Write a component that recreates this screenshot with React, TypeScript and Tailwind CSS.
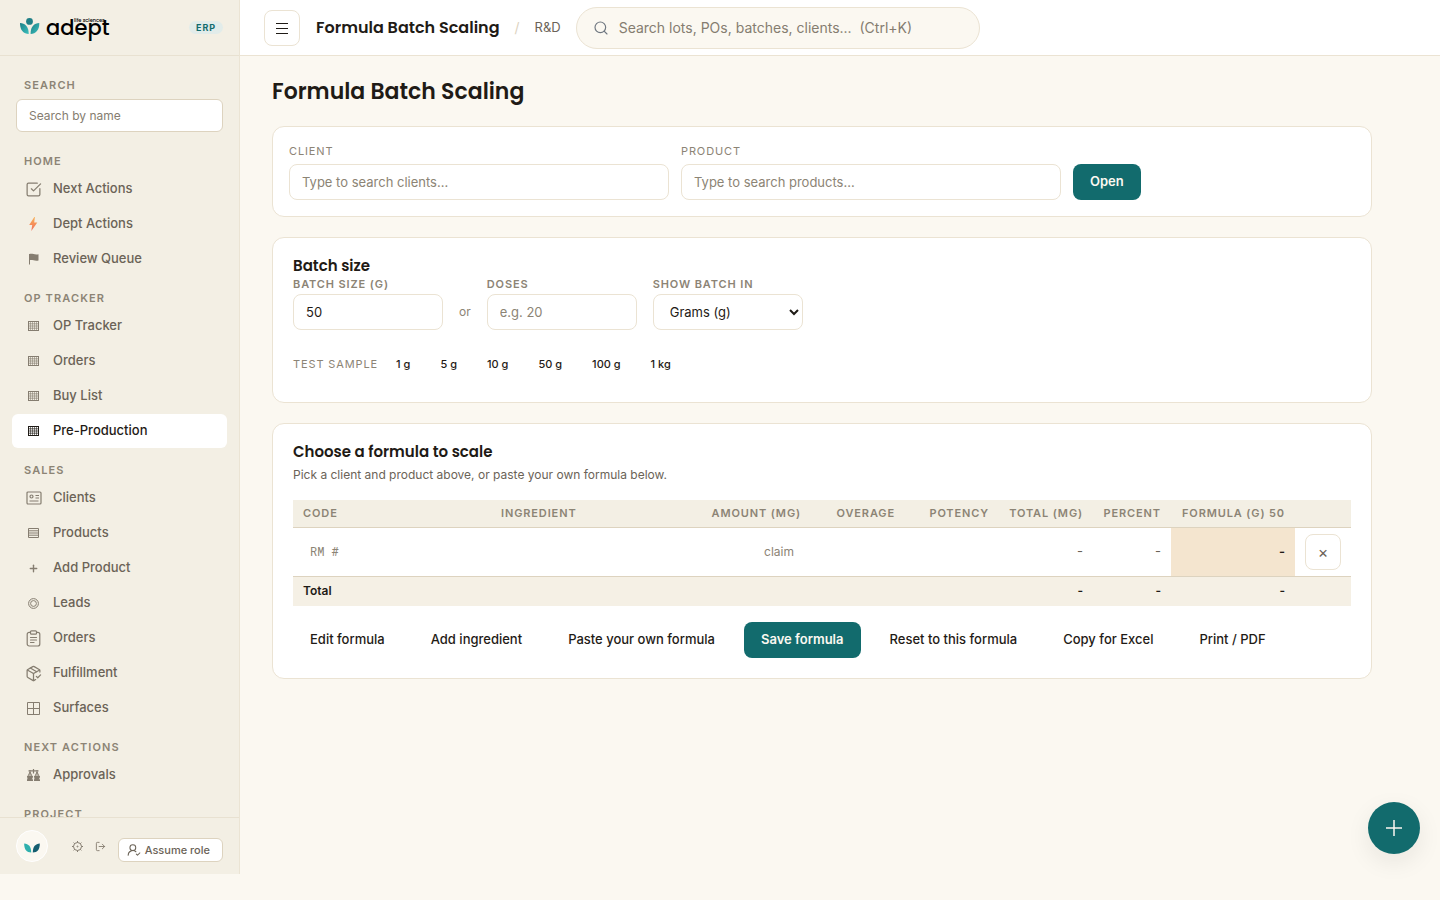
import type { ReactNode } from 'react'
import { LogOut, PackageCheck, Plus, Search, SquareCheckBig, UserRoundCheck } from 'lucide-react'

interface NavItem {
  label: string
  icon: ReactNode
  active?: boolean
}

interface NavSection {
  title: string
  items: NavItem[]
}

const heading = "font-['Poppins','Inter',sans-serif] font-semibold"
const label = 'text-[11px] leading-4 uppercase tracking-[0.08em] text-[#8c8475]'
const navLabel = 'text-[11px] leading-4 font-semibold uppercase tracking-[0.1em] text-[#8c8475]'
const field =
  'h-9 rounded-lg border border-[#ebe3d3] bg-white px-3 text-[13px] text-[#1f1b16] placeholder:text-[#8c8475] outline-none'
const ghostButton = 'h-9 rounded-lg px-[17px] text-[13px] font-medium text-[#1f1b16]'
const primaryButton = 'h-9 rounded-lg bg-[#126b6d] px-[17px] text-[13px] font-semibold text-[#fbf8f1]'

function BoltIcon() {
  return (
    <svg width="9" height="14" viewBox="0 0 9 14" aria-hidden="true">
      <defs>
        <linearGradient id="bolt" x1="0" y1="0" x2="0" y2="1">
          <stop offset="0" stopColor="#f7b257" />
          <stop offset="1" stopColor="#f26d5c" />
        </linearGradient>
      </defs>
      <path d="M5.300 0 .2 7.900h3L2.300 14l6-8.600H5.200L5.900 0z" fill="url(#bolt)" />
    </svg>
  )
}

function FlagIcon() {
  return (
    <svg width="10" height="12" viewBox="0 0 10 12" aria-hidden="true">
      <path d="M.5 1v10.500" stroke="currentColor" />
      <path d="M.5 1c3-.8 5 1.200 9 .3v6.200c-4 .9-6-1.100-9-.3z" fill="currentColor" />
    </svg>
  )
}

function GridIcon() {
  return (
    <svg width="11" height="11" viewBox="0 0 11 11" fill="none" stroke="currentColor" aria-hidden="true">
      <rect x=".5" y=".5" width="10" height="9" />
      <path d="M2.500 1v8M4.500 1v8M6.500 1v8M8.500 1v8" strokeOpacity=".55" />
      <path d="M1 2.800h9M1 5h9M1 7.200h9" strokeOpacity=".7" />
    </svg>
  )
}

function RowsIcon() {
  return (
    <svg width="11" height="11" viewBox="0 0 11 11" fill="none" stroke="currentColor" aria-hidden="true">
      <path d="M.5.5h10v9H.5zM1 2.800h9M1 5h9M1 7.200h9" />
    </svg>
  )
}

function RingsIcon() {
  return (
    <svg width="11" height="11" viewBox="0 0 11 11" fill="none" stroke="currentColor" aria-hidden="true">
      <circle cx="5.500" cy="5.500" r="4.900" />
      <circle cx="5.500" cy="5.500" r="2.900" />
    </svg>
  )
}

function WindowIcon() {
  return (
    <svg width="13" height="13" viewBox="0 0 13 13" fill="none" stroke="currentColor" aria-hidden="true">
      <path d="M.5.5h12v12H.5zM6.500.5v12M.5 6.500h12" />
    </svg>
  )
}

function ClipboardIcon() {
  return (
    <svg
      width="17"
      height="17"
      viewBox="0 0 17 17"
      fill="none"
      stroke="currentColor"
      strokeWidth="1.200"
      strokeLinecap="round"
      aria-hidden="true"
    >
      <rect x="2.200" y="2.300" width="12.600" height="13.700" rx="2" />
      <rect x="5.500" y=".8" width="6" height="3.400" rx="1" fill="#f3efe4" />
      <path d="M5.500 7.500h6M5.500 10h6M5.500 12.500h3.500" />
    </svg>
  )
}

function ScalesIcon() {
  return (
    <svg width="13" height="12" viewBox="0 0 13 12" fill="none" stroke="currentColor" aria-hidden="true">
      <path d="M6.500 0v4.500M1.500 1.800h10" strokeWidth="1.200" />
      <path d="M3 1v9M10 1v9M.8 7.500 3 3l2.200 4.500M7.800 7.500 10 3l2.200 4.500" />
      <path
        d="M0 7h6c0 2.500-1 3.200-1.500 3.200H6V12H0v-1.500C1 10 0 9 0 7zM7 7h6c0 2.500-1 3.200-1.500 3.200H13V12H7v-1.500C8 10 7 9 7 7z"
        fill="currentColor"
        stroke="none"
      />
    </svg>
  )
}

function ClientCardIcon() {
  return (
    <svg
      width="16"
      height="16"
      viewBox="0 0 16 16"
      fill="none"
      stroke="currentColor"
      strokeWidth="1.200"
      aria-hidden="true"
    >
      <rect x="1" y="2" width="14" height="12" rx="1" />
      <circle cx="5.500" cy="6.500" r="1.500" />
      <path d="M9.500 5.500h3.500M9.500 8h3.500M3.500 11h9" />
    </svg>
  )
}

const navSections: NavSection[] = [
  {
    title: 'Home',
    items: [
      { label: 'Next Actions', icon: <SquareCheckBig size={17} strokeWidth={1.75} /> },
      { label: 'Dept Actions', icon: <BoltIcon /> },
      { label: 'Review Queue', icon: <FlagIcon /> },
    ],
  },
  {
    title: 'OP Tracker',
    items: [
      { label: 'OP Tracker', icon: <GridIcon /> },
      { label: 'Orders', icon: <GridIcon /> },
      { label: 'Buy List', icon: <GridIcon /> },
      { label: 'Pre-Production', icon: <GridIcon />, active: true },
    ],
  },
  {
    title: 'Sales',
    items: [
      { label: 'Clients', icon: <ClientCardIcon /> },
      { label: 'Products', icon: <RowsIcon /> },
      { label: 'Add Product', icon: <Plus size={11} strokeWidth={3} /> },
      { label: 'Leads', icon: <RingsIcon /> },
      { label: 'Orders', icon: <ClipboardIcon /> },
      { label: 'Fulfillment', icon: <PackageCheck size={17} strokeWidth={1.75} /> },
      { label: 'Surfaces', icon: <WindowIcon /> },
    ],
  },
  { title: 'Next Actions', items: [{ label: 'Approvals', icon: <ScalesIcon /> }] },
  { title: 'Project', items: [] },
]

const samples = ['1 g', '5 g', '10 g', '50 g', '100 g', '1 kg']

function Logo() {
  return (
    <a href="#" className="flex items-center gap-[6px] text-black" aria-label="adept life sciences">
      <svg width="20" height="20" viewBox="0 0 20 20" aria-hidden="true">
        <defs>
          <linearGradient id="leaf" x1="0" y1="0" x2="1" y2="1">
            <stop offset="0" stopColor="#1b7f86" />
            <stop offset="1" stopColor="#3cc0bd" />
          </linearGradient>
        </defs>
        <circle cx="9.500" cy="3.400" r="3.400" fill="#1f7f86" />
        <path d="M0 5c5 .2 8.800 3.500 8.700 10.900C3.500 15.900-.2 12 0 5z" fill="url(#leaf)" />
        <path d="M19.300 5c-5 .2-8.800 3.500-8.700 10.900 5.200 0 8.900-3.900 8.700-10.900z" fill="url(#leaf)" />
      </svg>
      <span className="relative font-['Poppins','Lato',sans-serif] text-[21px] leading-7 font-medium">
        adept
        <span className="absolute top-1 left-7 text-[5px] leading-[6px] whitespace-nowrap">life sciences</span>
      </span>
    </a>
  )
}

function Sidebar() {
  return (
    <aside className="flex h-[calc(100vh-26px)] w-60 shrink-0 flex-col border-r border-[#ebe4d4] bg-[#f3efe4]">
      <div className="flex h-14 shrink-0 items-center justify-between border-b border-[#e8e1d1] pr-4 pl-5">
        <Logo />
        <span className="rounded-full bg-[#e2ecea] px-[7px] text-[9px] leading-[13px] font-bold tracking-[0.1em] text-[#126b6d]">
          ERP
        </span>
      </div>
      <nav className="min-h-0 flex-1 overflow-hidden px-3 pt-[21px]">
        <div className="px-1">
          <label htmlFor="nav-search" className={`${navLabel} block px-2`}>
            Search
          </label>
          <input
            id="nav-search"
            placeholder="Search by name"
            className="mt-[6px] block h-[33px] w-full rounded-md border border-[#ddd3bf] bg-white px-3 text-[12px] outline-none placeholder:text-[#857d70]"
          />
        </div>
        {navSections.map((section, i) => (
          <div key={section.title} className={i === 0 ? 'mt-[21px]' : 'mt-[14px]'}>
            <h2 className={`${navLabel} px-3`}>{section.title}</h2>
            <ul className="mt-[3px] flex flex-col gap-px">
              {section.items.map((item) => (
                <li key={item.label}>
                  <a
                    href="#"
                    className={`flex h-[34px] items-center gap-[10px] rounded-md px-3 text-[13px] font-medium ${
                      item.active ? 'bg-white text-[#1f1b16]' : 'text-[#6b6357]'
                    }`}
                  >
                    <span
                      className={`flex w-[19px] justify-center ${item.active ? 'text-[#1f1b16]' : 'text-[#857d70]'}`}
                    >
                      {item.icon}
                    </span>
                    {item.label}
                  </a>
                </li>
              ))}
            </ul>
          </div>
        ))}
      </nav>
      <div className="flex h-[57px] shrink-0 items-center justify-between border-t border-[#e8e1d1] px-4">
        <span className="flex size-8 items-center justify-center rounded-full border border-white bg-[#fbf8f1]">
          <svg width="16" height="14" viewBox="0 0 16 14" aria-hidden="true">
            <path d="M.2 4.500C4.500 4.800 7.200 7.500 7.200 13.500 2.700 13.500 0 10.300.2 4.500z" fill="#2fb0ad" />
            <path d="M15.800 4.500C11.500 4.800 8.800 7.500 8.800 13.500c4.500 0 7.200-3.200 7-9z" fill="#155e70" />
          </svg>
        </span>
        <div className="flex items-center text-[#857d70]">
          <button type="button" aria-label="Settings" className="mr-3">
            <svg width="11" height="11" viewBox="0 0 11 11" fill="none" stroke="currentColor" aria-hidden="true">
              <circle cx="5.500" cy="5.500" r="4" />
              <path d="M5.500 0v1.500M5.500 9.500V11M0 5.500h1.500M9.500 5.500H11M1.600 1.600l1 1M8.400 8.400l1 1M1.600 9.400l1-1M8.400 2.600l1-1" />
              <circle cx="5.500" cy="5.500" r=".5" />
            </svg>
          </button>
          <button type="button" aria-label="Log out" className="mr-3">
            <LogOut size={11} />
          </button>
          <button
            type="button"
            className="mt-2 flex h-6 items-center gap-1 rounded-md border border-[#ddd3bf] bg-white pr-3 pl-2 text-[11px] font-medium text-[#6b6357]"
          >
            <UserRoundCheck size={14} strokeWidth={1.75} />
            Assume role
          </button>
        </div>
      </div>
    </aside>
  )
}

function TopBar() {
  return (
    <header className="flex h-14 items-center gap-4 border-b border-[#ebe3d3] bg-white px-6">
      <button
        type="button"
        aria-label="Toggle menu"
        className="flex size-9 items-center justify-center rounded-lg border border-[#ebe3d3] text-[#1f1b16]"
      >
        <svg width="12" height="12" viewBox="0 0 12 12" stroke="currentColor" aria-hidden="true">
          <path d="M0 1.500h12M0 6.500h12M0 11.500h12" />
        </svg>
      </button>
      <div className="flex items-center gap-[15px]">
        <span className={`${heading} text-base`}>Formula Batch Scaling</span>
        <span className="text-sm text-[#ddd3bf]">/</span>
        <span className="text-[13px] text-[#6b6357]">R&amp;D</span>
        <label className="flex h-[42px] w-[404px] items-center gap-[10px] rounded-full border border-[#ebe3d3] bg-[#fbf8f1] px-4">
          <Search size={16} strokeWidth={1.75} className="text-[#6f7780]" />
          <input
            aria-label="Search"
            placeholder="Search lots, POs, batches, clients...  (Ctrl+K)"
            className="min-w-0 flex-1 bg-transparent text-sm outline-none placeholder:text-[#857d70]"
          />
        </label>
      </div>
    </header>
  )
}

function LookupCard() {
  return (
    <section className="flex items-end gap-3 rounded-xl border border-[#ebe3d3] bg-white p-4">
      <div className="flex w-[380px] flex-col gap-[5px]">
        <label htmlFor="client" className={label}>
          Client
        </label>
        <input id="client" placeholder="Type to search clients..." className={field} />
      </div>
      <div className="flex w-[380px] flex-col gap-[5px]">
        <label htmlFor="product" className={label}>
          Product
        </label>
        <input id="product" placeholder="Type to search products..." className={field} />
      </div>
      <button type="button" className={primaryButton}>
        Open
      </button>
    </section>
  )
}

function BatchSizeCard() {
  return (
    <section className="rounded-xl border border-[#ebe3d3] bg-white px-5 pt-[18px] pb-6">
      <h2 className={`${heading} text-[15px] leading-5`}>Batch size</h2>
      <div className="flex items-end gap-4">
        <div className="flex w-[150px] flex-col gap-[2px]">
          <label htmlFor="batch-size" className={`${label} font-semibold`}>
            Batch size (g)
          </label>
          <input id="batch-size" defaultValue="50" className={field} />
        </div>
        <span className="flex h-9 items-center text-[12px] text-[#8c8475]">or</span>
        <div className="flex w-[150px] flex-col gap-[2px]">
          <label htmlFor="doses" className={`${label} font-semibold`}>
            Doses
          </label>
          <input id="doses" placeholder="e.g. 20" className={field} />
        </div>
        <div className="flex w-[150px] flex-col gap-[2px]">
          <label htmlFor="unit" className={`${label} font-semibold`}>
            Show batch in
          </label>
          <select id="unit" className="h-9 rounded-lg border border-[#ebe3d3] bg-white pl-3 text-[13px] text-[#1f1b16]">
            <option>Grams (g)</option>
            <option>Kilograms (kg)</option>
          </select>
        </div>
      </div>
      <div className="mt-5 flex items-center gap-[6px]">
        <span className={label}>Test sample</span>
        {samples.map((sample) => (
          <button key={sample} type="button" className="h-7 px-3 text-[11px] font-medium text-[#1f1b16]">
            {sample}
          </button>
        ))}
      </div>
    </section>
  )
}

function FormulaCard() {
  return (
    <section className="rounded-xl border border-[#ebe3d3] bg-white px-5 pt-[18px] pb-5">
      <h2 className={`${heading} text-[15px] leading-5`}>Choose a formula to scale</h2>
      <p className="mt-1 text-[12px] leading-[18px] text-[#6b6357]">
        Pick a client and product above, or paste your own formula below.
      </p>
      <table className="mt-4 w-full table-fixed text-right text-[12px]">
        <colgroup>
          <col className="w-[198px]" />
          <col className="w-[210px]" />
          <col className="w-[110px]" />
          <col className="w-[94px]" />
          <col className="w-[94px]" />
          <col className="w-[94px]" />
          <col className="w-[78px]" />
          <col className="w-[124px]" />
          <col className="w-14" />
        </colgroup>
        <thead>
          <tr className="h-[27px] border-b border-[#ddd3bf] bg-[#f3efe4] text-[11px] tracking-[0.08em] whitespace-nowrap text-[#8c8475] uppercase *:px-[10px] *:font-semibold">
            <th className="text-left">Code</th>
            <th className="text-left">Ingredient</th>
            <th>Amount (mg)</th>
            <th>Overage</th>
            <th>Potency</th>
            <th>Total (mg)</th>
            <th>Percent</th>
            <th>Formula (g) 50</th>
            <th aria-label="Remove" />
          </tr>
        </thead>
        <tbody>
          <tr className="h-[49px] text-[13px] text-[#6b6357] *:px-[10px]">
            <td>
              <input
                aria-label="Code"
                placeholder="RM #"
                className="w-full px-[7px] font-['Roboto_Mono','Liberation_Mono',monospace] text-[12px] outline-none placeholder:text-[#8c8475]"
              />
            </td>
            <td>
              <input aria-label="Ingredient" className="w-full px-[7px] outline-none" />
            </td>
            <td>
              <input
                aria-label="Amount"
                placeholder="claim"
                className="w-full px-[7px] text-right text-[12px] outline-none placeholder:text-[#8c8475]"
              />
            </td>
            <td>
              <input aria-label="Overage" className="w-full outline-none" />
            </td>
            <td>
              <input aria-label="Potency" className="w-full outline-none" />
            </td>
            <td>-</td>
            <td>-</td>
            <td className="bg-[#f4e5cf] font-semibold text-[#1f1b16]">-</td>
            <td>
              <button
                type="button"
                aria-label="Remove row"
                className="flex size-9 items-center justify-center rounded-lg border border-[#ebe3d3] text-base"
              >
                ×
              </button>
            </td>
          </tr>
        </tbody>
        <tfoot>
          <tr className="h-[30px] border-t border-[#ddd3bf] bg-[#f5f0e5] font-semibold text-[#1f1b16] *:px-[10px]">
            <td className="text-left" colSpan={5}>
              Total
            </td>
            <td>-</td>
            <td>-</td>
            <td>-</td>
            <td />
          </tr>
        </tfoot>
      </table>
      <div className="mt-4 flex flex-wrap gap-3">
        <button type="button" className={ghostButton}>Edit formula</button>
        <button type="button" className={ghostButton}>Add ingredient</button>
        <button type="button" className={ghostButton}>Paste your own formula</button>
        <button type="button" className={primaryButton}>Save formula</button>
        <button type="button" className={ghostButton}>Reset to this formula</button>
        <button type="button" className={ghostButton}>Copy for Excel</button>
        <button type="button" className={ghostButton}>Print / PDF</button>
      </div>
    </section>
  )
}

export default function App() {
  return (
    <div className="flex min-h-screen bg-[#fbf8f1] font-['Inter',sans-serif] text-[#1f1b16]">
      <Sidebar />
      <div className="min-w-0 flex-1">
        <TopBar />
        <main className="flex max-w-[1164px] flex-col gap-5 px-8 pt-[22px]">
          <h1 className={`${heading} text-[22px] leading-7`}>Formula Batch Scaling</h1>
          <LookupCard />
          <BatchSizeCard />
          <FormulaCard />
        </main>
      </div>
      <button
        type="button"
        aria-label="Create"
        className="fixed right-5 bottom-[46px] flex size-[52px] items-center justify-center rounded-full bg-[#126b6d] text-[#fbf8f1] shadow-[0_8px_24px_rgba(31,27,22,0.08)]"
      >
        <svg width="16" height="16" viewBox="0 0 16 16" stroke="currentColor" strokeWidth="1.500" aria-hidden="true">
          <path d="M8 0v16M0 8h16" />
        </svg>
      </button>
    </div>
  )
}
